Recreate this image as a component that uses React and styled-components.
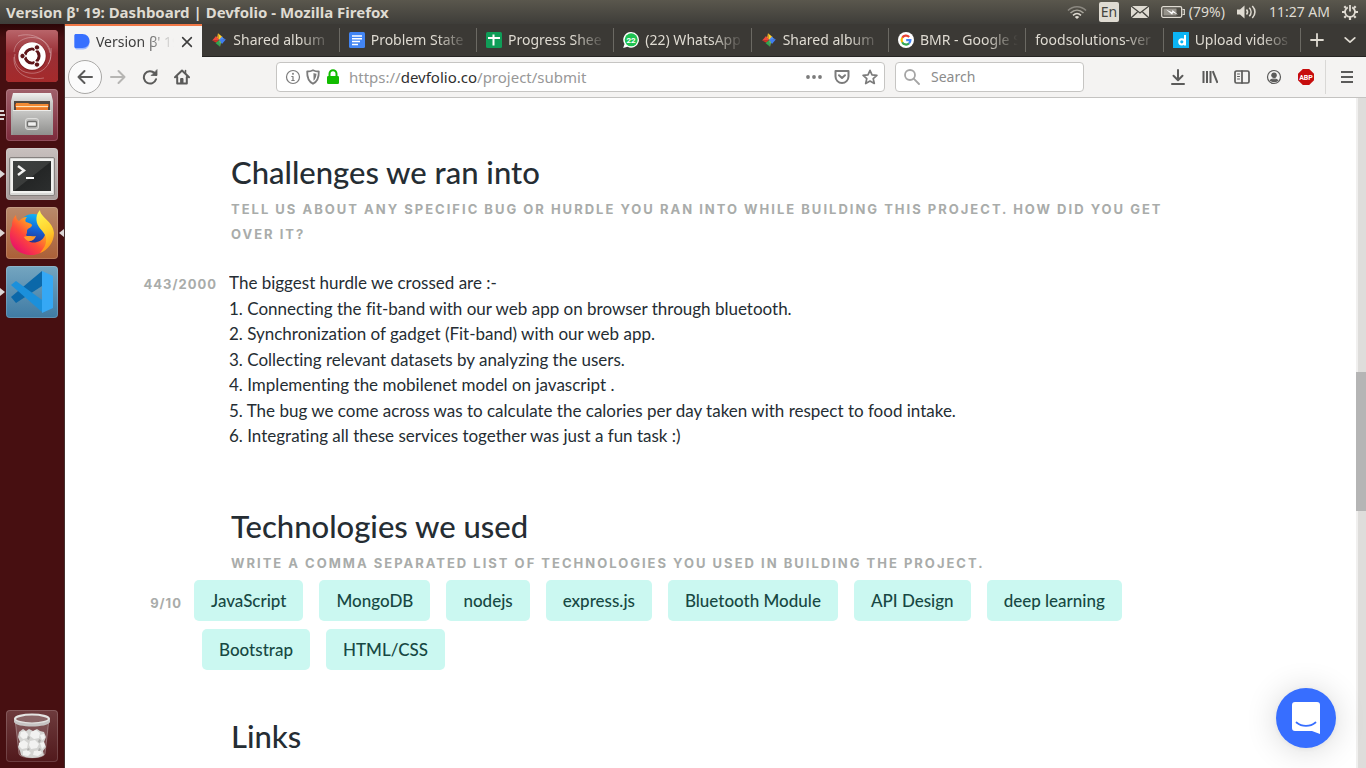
import React from "react";
import styled, { createGlobalStyle, css } from "styled-components";

const UI = `"Noto Sans", "Open Sans", sans-serif`;
const BODY = `Lato, "Open Sans", sans-serif`;
const CAPS = `Inter, "Open Sans", sans-serif`;

const GlobalStyle = createGlobalStyle`
  *, *::before, *::after { box-sizing: border-box; }
  body { margin: 0; background: #fff; overflow: hidden; }
  button, input, textarea { font: inherit; color: inherit; margin: 0; padding: 0; border: 0; background: none; outline: none; }
  button { display: inline-flex; align-items: center; justify-content: center; cursor: pointer; }
  svg { display: block; flex: none; }
  h2, p { margin: 0; }
`;

/* ---------- desktop ---------- */

const Desktop = styled.div`
  display: flex;
  flex-direction: column;
  height: 100vh;
`;

const Panel = styled.header`
  flex: none;
  display: flex;
  align-items: center;
  height: 24px;
  padding: 0 8px 0 6px;
  background: linear-gradient(#5a574d, #3e3d39);
  color: #dfdbd2;
  font: 14px/24px ${UI};
`;

const PanelTitle = styled.div`
  flex: 1;
  min-width: 0;
  white-space: nowrap;
  font-weight: 700;
  font-size: 15px;
`;

const Indicators = styled.div`
  display: flex;
  align-items: center;
  gap: 12px;
`;

const Indicator = styled.button`
  gap: 4px;
  height: 24px;
  font-size: 14px;
  white-space: nowrap;
`;

const Keyboard = styled(Indicator)`
  width: 20px;
  height: 20px;
  border-radius: 2px;
  background: #dfdbd2;
  color: #45443f;
`;

const Workspace = styled.div`
  flex: 1;
  min-height: 0;
  display: flex;
`;

const Launcher = styled.nav`
  flex: none;
  display: flex;
  flex-direction: column;
  gap: 7px;
  width: 65px;
  padding: 6px 0 6px;
  border-right: 1px solid #45302f;
  background: linear-gradient(#2b0607, #470f11 14px, #470f11);
`;

const LauncherItem = styled.div`
  display: flex;
  align-items: center;
  height: 52px;
  ${(p) => p.$last && css`margin-top: auto;`}
`;

const Marks = styled.div`
  width: 6px;
`;

const Tile = styled.button`
  width: 52px;
  height: 52px;
  border-radius: 4px;
  overflow: hidden;
  background: ${(p) => p.$bg};
  box-shadow: inset 0 0 0 1px rgba(255, 255, 255, 0.16);
`;

/* ---------- browser ---------- */

const Browser = styled.div`
  flex: 1;
  min-width: 0;
  display: flex;
  flex-direction: column;
`;

const TabStrip = styled.div`
  flex: none;
  display: flex;
  height: 33px;
  background: #3b3935;
  color: #dfdbd2;
  font: 14px/20px ${UI};
`;

const Tab = styled.button`
  flex: 1 1 0;
  min-width: 0;
  gap: 6px;
  padding: 0 8px 0 9px;
  justify-content: flex-start;
  border-bottom: 1px solid #252422;
  background: linear-gradient(#6b6963, #6b6963) right center / 1px 24px no-repeat;
  ${(p) =>
    p.$active &&
    css`
      background: #f4f3f2;
      color: #3d3d3d;
      border-top: 2px solid #f07746;
      border-bottom: 0;
    `}
`;

const TabLabel = styled.span`
  flex: 1;
  min-width: 0;
  overflow: hidden;
  text-align: left;
  white-space: nowrap;
  mask-image: linear-gradient(to left, transparent, #000 32px);
`;

const TabTools = styled.div`
  flex: none;
  display: flex;
  width: 65px;
  border-bottom: 1px solid #252422;
`;

const TabTool = styled.button`
  flex: 1;
`;

const Toolbar = styled.div`
  flex: none;
  display: flex;
  align-items: center;
  height: 41px;
  padding: 0 3px;
  background: #f4f3f2;
  border-bottom: 1px solid #c4c3c1;
  color: #5b5b5a;
  font: 14px/20px ${UI};
`;

const ToolButton = styled.button`
  width: 32px;
  height: 32px;
  color: ${(p) => (p.$dim ? "#b6b5b3" : "inherit")};
  ${(p) =>
    p.$round &&
    css`
      width: 34px;
      height: 34px;
      border: 1px solid #a9a8a6;
      border-radius: 50%;
      background: #fbfbfb;
    `}
`;

const Spacer = styled.div`
  width: 78px;
`;

const Field = styled.div`
  display: flex;
  align-items: center;
  height: 30px;
  gap: 4px;
  padding: 0 2px 0 8px;
  border: 1px solid #c6c5c3;
  border-radius: 4px;
  background: #fff;
  color: #7b7b7b;
  ${(p) => (p.$grow ? css`flex: 1; min-width: 0;` : css`width: 189px; margin-left: 10px; gap: 11px;`)}
`;

const Address = styled.div`
  flex: 1;
  margin-left: 4px;
  white-space: nowrap;
  font-size: 15px;
  color: #989898;
  b { font-weight: 400; color: #2f2f2f; }
`;

const SearchInput = styled.input`
  width: 100%;
  &::placeholder { color: #8b8b8b; opacity: 1; }
`;

const FieldButton = styled.button`
  width: ${(p) => p.$w || 16}px;
  height: 20px;
`;

const Divider = styled.div`
  width: 1px;
  height: 34px;
  margin: 0 5px 0 3px;
  background: #d9d8d6;
`;

const Viewport = styled.div`
  flex: 1;
  min-height: 0;
  display: flex;
`;

const Scrollbar = styled.div`
  flex: none;
  display: flex;
  flex-direction: column;
  width: 10px;
  background: #dedddb;
`;

const Track = styled.div`
  flex: ${(p) => p.$share} 0 0;
  border-left: 2px solid #f0efee;
`;

const Thumb = styled.div`
  flex: 139 0 0;
  background: #b5b5b5;
`;

/* ---------- page ---------- */

const Page = styled.main`
  flex: 1;
  min-width: 0;
  overflow: hidden;
  padding-top: 54px;
  background: #fff;
  color: #252d33;
`;

const Form = styled.form`
  display: flex;
  flex-direction: column;
  max-width: 1161px;
  margin: 0 auto;
`;

const Section = styled.section`
  margin-bottom: ${(p) => p.$gap || 0}px;
`;

const SectionHead = styled.div`
  padding: 0 100px 0 101px;
`;

const Title = styled.h2`
  margin-bottom: 5px;
  font: 500 31px/40px ${BODY};
`;

const Hint = styled.p`
  font: 700 13px/25px ${CAPS};
  letter-spacing: 2px;
  text-transform: uppercase;
  color: #a9acaa;
`;

const FieldRow = styled.div`
  display: flex;
  align-items: flex-start;
  gap: 12px;
  margin-top: ${(p) => p.$top}px;
  padding-right: 100px;
`;

const Counter = styled.div`
  flex: none;
  width: ${(p) => p.$w}px;
  padding-top: ${(p) => p.$top}px;
  text-align: right;
  font: 700 13px/25px ${CAPS};
  letter-spacing: 1px;
  color: #a9acaa;
`;

const Answer = styled.textarea`
  flex: 1;
  display: block;
  resize: none;
  overflow: hidden;
  font: 17px/1.5 ${BODY};
  font-variant-ligatures: none;
`;

const Tags = styled.ul`
  flex: 1;
  display: flex;
  flex-wrap: wrap;
  row-gap: 8px;
  margin: 0;
  padding: 0;
  list-style: none;
`;

const Tag = styled.li`
  margin: 0 8px;
  padding: 8px 17px;
  border-radius: 5px;
  background: #cbf8f1;
  color: #174843;
  font: 500 17px/25px ${BODY};
  &:first-child { margin-left: 0; }
`;

const Chat = styled.button`
  position: fixed;
  right: 30px;
  bottom: 20px;
  width: 60px;
  height: 60px;
  border-radius: 50%;
  background: #376eff;
  box-shadow: 0 1px 6px rgba(0, 0, 0, 0.06), 0 2px 32px rgba(0, 0, 0, 0.16);
`;

/* ---------- drawings ---------- */

const Line = ({ size = 16, w = 2, children, ...rest }) => (
  <svg width={size} height={size} viewBox="0 0 16 16" fill="none" stroke="currentColor" strokeWidth={w} strokeLinecap="round" strokeLinejoin="round" {...rest}>
    {children}
  </svg>
);

const DevfolioMark = () => (
  <svg width="16" height="16" viewBox="0 0 16 16">
    <path d="M2.500 2H9c4 0 6.500 3 6.500 6.500S13 15.500 9 15.500H3.500c-1.500 0-2.500-.6-2.500-2z" fill="#9db9ff" />
    <path d="M2 0h6.500c4 0 7 3 7 7s-3 7-7 7H2c-1 0-1.700-.6-1.700-1.600V1.600C.3.600 1 0 2 0z" fill="#3770ff" />
  </svg>
);

const PhotosMark = () => (
  <svg width="16" height="16" viewBox="0 0 16 16">
    <path d="M7 1.200 11.500 5 8 8z" fill="#ffcf2b" />
    <path d="M7 1.200 8 8 6 6z" fill="#f9a825" />
    <path d="M14.800 7.500 11 12 8 8z" fill="#3f7df0" />
    <path d="M8 8 11 4.500l1.500 1.700 2.300 1.300z" fill="#4d8dfb" />
    <path d="M9 14.800 4.500 11 8 8z" fill="#2fa84f" />
    <path d="M9 14.800 8 8l2 2z" fill="#6fc36f" />
    <path d="M1.200 8.500 5 4l3 4z" fill="#ef4a3c" />
    <path d="M1.200 8.500 8 8l-3 2.500z" fill="#d93025" />
  </svg>
);

const DocsMark = () => (
  <svg width="16" height="16" viewBox="0 0 16 16">
    <rect width="16" height="16" rx="1.500" fill="#4285f4" />
    <path d="M3 4h10M3 6.800h10M3 9.600h8M3 12.400h6" stroke="#fff" strokeWidth="1.500" />
  </svg>
);

const SheetsMark = () => (
  <svg width="16" height="16" viewBox="0 0 16 16">
    <rect width="16" height="16" rx="1.500" fill="#0f9d58" />
    <path d="M2 6h12M7.500 2.500v11" stroke="#fff" strokeWidth="2" />
  </svg>
);

const WhatsMark = () => (
  <svg width="16" height="16" viewBox="0 0 16 16">
    <path d="M8.200 0a7.800 7.800 0 1 1-3.700 14.700L.2 16l1.300-4A7.800 7.800 0 0 1 8.200 0z" fill="#fff" />
    <circle cx="8.200" cy="7.800" r="6.500" fill="#1fc252" />
    <text x="8" y="10.800" textAnchor="middle" fontSize="8" fontWeight="700" fontFamily="Roboto, sans-serif" fill="#fff">22</text>
  </svg>
);

const GoogleMark = () => (
  <svg width="16" height="16" viewBox="0 0 16 16" fill="none" strokeWidth="2.200">
    <circle cx="8" cy="8" r="8" fill="#fff" />
    <path d="M11.200 4.900A4.400 4.400 0 0 0 4.200 5.800" stroke="#ea4335" />
    <path d="M4.200 5.800a4.400 4.400 0 0 0 0 4.400" stroke="#fbbc05" />
    <path d="M4.200 10.200a4.400 4.400 0 0 0 6.800 1.200" stroke="#34a853" />
    <path d="M11 11.400A4.400 4.400 0 0 0 12.400 8.100H8.200" stroke="#4285f4" />
  </svg>
);

const DailyMark = () => (
  <svg width="16" height="16" viewBox="0 0 16 16">
    <rect width="16" height="16" fill="#0bb4f5" />
    <circle cx="8.800" cy="9.800" r="2.600" fill="none" stroke="#fff" strokeWidth="2" />
    <path d="M12 3v10.400" stroke="#fff" strokeWidth="2" />
  </svg>
);

const UbuntuArt = () => (
  <svg width="52" height="52" viewBox="0 0 52 52">
    <defs>
      <linearGradient id="ub" x1="0" y1="0" x2="0" y2="1">
        <stop offset="0" stopColor="#b9656a" />
        <stop offset=".45" stopColor="#9a2f35" />
        <stop offset="1" stopColor="#a52a2b" />
      </linearGradient>
    </defs>
    <rect width="52" height="52" fill="url(#ub)" />
    <g fill="none" stroke="#fff" strokeOpacity=".3">
      <path d="M8 22C9 8 28 3 39 12c7 6 7 17 3 22" />
      <path d="M45 18c2 17-9 27-22 25C13 42 7 33 9 24" />
      <path d="M12 6c13-4 29 2 32 17" />
      <path d="M38 48C21 51 7 43 8 27" />
    </g>
    <circle cx="26" cy="26.500" r="14.500" fill="#5e1015" opacity=".4" />
    <circle cx="26" cy="26" r="13.700" fill="#fff" />
    <circle cx="26" cy="26" r="7" fill="none" stroke="#5e1519" strokeWidth="3.200" />
    <path d="M26 26 14.500 26M26 26l5.700-9.900M26 26l5.700 9.900" stroke="#fff" strokeWidth="1.500" />
    <g fill="#5e1519" stroke="#fff" strokeWidth="1">
      <circle cx="16.500" cy="26" r="2.700" />
      <circle cx="31" cy="17.400" r="2.700" />
      <circle cx="31" cy="34.600" r="2.700" />
    </g>
    <circle cx="26" cy="26" r="5.400" fill="#fff" />
  </svg>
);

const FilesArt = () => (
  <svg width="52" height="52" viewBox="0 0 52 52">
    <defs>
      <linearGradient id="fa" x1="0" y1="0" x2="0" y2="1">
        <stop offset="0" stopColor="#f0f0ef" />
        <stop offset=".25" stopColor="#c9c9c7" />
        <stop offset="1" stopColor="#969694" />
      </linearGradient>
      <linearGradient id="fb" x1="0" y1="0" x2="0" y2="1">
        <stop offset="0" stopColor="#c9c9c7" />
        <stop offset="1" stopColor="#8f8f8d" />
      </linearGradient>
    </defs>
    <path d="M7 4h38l2 8v34H5V12z" fill="url(#fa)" />
    <path d="M8 12h36v10H8z" fill="#504942" />
    <path d="M9 15h34v3H9z" fill="#b54f1d" />
    <path d="M10 14h12l2 1h18v8H10z" fill="#f28b34" />
    <path d="M10 17h32v1H10z" fill="#ffe3bd" />
    <path d="M10 19h32v3H10z" fill="#e9792b" />
    <path d="M7 21h38v25H7z" fill="url(#fb)" />
    <path d="M7 21.500h38" stroke="#ececea" />
    <rect x="19.500" y="29.500" width="13" height="11" rx="2.500" fill="#bdbdbb" stroke="#dededc" />
    <rect x="21.500" y="32.500" width="9" height="5" rx="1" fill="#f0f0ef" stroke="#71716f" strokeWidth="1.300" />
  </svg>
);

const TerminalArt = () => (
  <svg width="52" height="52" viewBox="0 0 52 52">
    <defs>
      <linearGradient id="ta" x1="0" y1="0" x2="1" y2="1">
        <stop offset="0" stopColor="#3d403f" />
        <stop offset=".5" stopColor="#3a3c3b" />
        <stop offset=".52" stopColor="#242626" />
        <stop offset="1" stopColor="#2c2e2e" />
      </linearGradient>
    </defs>
    <rect x="3.500" y="9.500" width="45" height="38" rx="1.500" fill="#d9d9d7" stroke="#85807e" />
    <rect x="5" y="11" width="42" height="34" fill="#f1f1ef" />
    <rect x="7" y="13" width="38" height="30" fill="url(#ta)" />
    <path d="m12 18 6 4.500-6 4.500" fill="none" stroke="#f2f2f1" strokeWidth="2.400" />
    <path d="M20 30h8" stroke="#fff" strokeWidth="2" />
  </svg>
);

const FirefoxArt = () => (
  <svg width="52" height="52" viewBox="0 0 52 52">
    <defs>
      <linearGradient id="ga" x1=".9" y1=".1" x2=".15" y2=".9">
        <stop offset="0" stopColor="#fff04a" />
        <stop offset=".3" stopColor="#ffa321" />
        <stop offset=".62" stopColor="#ff4a3a" />
        <stop offset="1" stopColor="#e8106a" />
      </linearGradient>
      <linearGradient id="gb" x1=".6" y1="0" x2=".4" y2="1">
        <stop offset="0" stopColor="#12b6f6" />
        <stop offset=".5" stopColor="#1464d8" />
        <stop offset="1" stopColor="#282a85" />
      </linearGradient>
      <linearGradient id="gc" x1=".4" y1="0" x2=".6" y2="1">
        <stop offset="0" stopColor="#fff44f" />
        <stop offset=".5" stopColor="#ffd22e" />
        <stop offset="1" stopColor="#ff8b16" />
      </linearGradient>
    </defs>
    <circle cx="27" cy="22" r="15" fill="url(#gb)" />
    <path d="M6 19c0-5 1-8 4-11 0 3 1 5 3 6 2-2 4-4 8-4-2 2-2 4-1 5 2 1 5 1 6 3 0 3-5 3-5 6 0 1 0 3-1 4 2 3 5 2 9 2-1 3-4 4-6 4 3 3 13 2 16-6 2-6-1-11-3-16l10 12c1 14-9 24-20 24C13 48 4 40 4 29c0-4 0-7 2-10z" fill="url(#ga)" />
    <path d="M33 20c-4-6-3-13 1-17 0 7 13 11 14 23 0 9-6 17-14 20 3-4 7-8 6-15-1-5-4-7-7-11z" fill="url(#gc)" />
    <path d="M18 30c4-2 7 0 12-1-1 3-4 5-7 5-2 0-4-2-5-4z" fill="#ff9a2b" />
  </svg>
);

const CodeArt = () => (
  <svg width="52" height="52" viewBox="0 0 52 52">
    <path d="M5 31 36 5v15L10 37z" fill="#0b68a9" />
    <path d="m5 19 5-4 26 19v12z" fill="#1b90db" />
    <path d="m36 5 11 5v32l-11 5z" fill="#35a8f5" />
  </svg>
);

const TrashArt = () => (
  <svg width="52" height="52" viewBox="0 0 52 52">
    <path d="M9 9h34l-4 35c-1 5-25 5-26 0z" fill="#fff" fillOpacity=".16" stroke="#fff" strokeOpacity=".3" />
    <path d="m13 22 4-3 3 2 3-2 4 2 4-2 3 2 4 1 2 5-2 5 2 5-3 4 1 4c-5 4-18 4-23 0l-1-4-2-4 2-5-2-5z" fill="#d4d4d2" />
    <g fill="#f2f2f1">
      <path d="m15 22 4-1 3 3-1 4-4 1-3-3zM25 22l5-2 4 3-1 5-5 1-4-3zM34 25l4-1 1 4-3 2zM13 33l5-3 4 3-1 5-5 1-3-3zM24 31l5-1 4 4-2 4-6 1-2-4zM34 33l4-1 1 4-3 3zM17 41l5-1 3 3-3 3-5-1zM28 41l6-1 2 3-4 3-5-1z" />
    </g>
    <g fill="#aeaeac">
      <path d="m22 26 2 1-1 3-2-1zM33 29l2 1-1 3-2-1zM22 38l2 1-2 2-1-1zM33 38l2 1-1 2h-2z" />
    </g>
    <ellipse cx="26" cy="9" rx="17" ry="4.500" fill="#8a6667" stroke="#e4e4e2" strokeWidth="2.200" />
    <path d="M8 9v3c2 6 34 6 36 0V9c-2 6-34 6-36 0z" fill="#c6c4c3" />
  </svg>
);

const Arrow = () => (
  <svg width="6" height="10" viewBox="0 0 6 10"><path d="M0 1v8l5-4z" fill="#dcd6d6" /></svg>
);
const ArrowLeft = () => (
  <svg width="6" height="10" viewBox="0 0 6 10"><path d="M6 1v8L1 5z" fill="#dcd6d6" /></svg>
);
const Bars = () => (
  <svg width="6" height="14" viewBox="0 0 6 14"><path d="M0 3h4M0 7h5M0 11h4" stroke="#dcd6d6" strokeWidth="2" /></svg>
);

/* ---------- data ---------- */

const apps = [
  { name: "Ubuntu", art: <UbuntuArt />, bg: "#9a2f35" },
  { name: "Files", art: <FilesArt />, bg: "linear-gradient(#a0606a, #7c2a3b)", mark: <Bars /> },
  { name: "Terminal", art: <TerminalArt />, bg: "linear-gradient(#c8c0be, #a79d9b)", mark: <Arrow /> },
  { name: "Firefox", art: <FirefoxArt />, bg: "linear-gradient(#b98a6c, #ab5f37)", mark: <Arrow />, focused: true },
  { name: "Visual Studio Code", art: <CodeArt />, bg: "linear-gradient(#74a5c0, #3f7ba4)", mark: <Arrow /> },
  { name: "Trash", art: <TrashArt />, bg: "linear-gradient(#6e3b3d, #51191c)", last: true },
];

const tabs = [
  { label: "Version β' 19", icon: <DevfolioMark />, active: true },
  { label: "Shared album", icon: <PhotosMark /> },
  { label: "Problem State", icon: <DocsMark /> },
  { label: "Progress Shee", icon: <SheetsMark /> },
  { label: "(22) WhatsApp", icon: <WhatsMark /> },
  { label: "Shared album", icon: <PhotosMark /> },
  { label: "BMR - Google S", icon: <GoogleMark /> },
  { label: "foodsolutions-ver" },
  { label: "Upload videos", icon: <DailyMark /> },
];

const answer = `The biggest hurdle we crossed are :-
1. Connecting the fit-band with our web app on browser through bluetooth.
2. Synchronization of gadget (Fit-band) with our web app.
3. Collecting relevant datasets by analyzing the users.
4. Implementing the mobilenet model on javascript .
5. The bug we come across was to calculate the calories per day taken with respect to food intake.
6. Integrating all these services together was just a fun task :)`;

const tags = ["JavaScript", "MongoDB", "nodejs", "express.js", "Bluetooth Module", "API Design", "deep learning", "Bootstrap", "HTML/CSS"];

/* ---------- app ---------- */

const TopPanel = () => (
  <Panel>
    <PanelTitle>Version β' 19: Dashboard | Devfolio - Mozilla Firefox</PanelTitle>
    <Indicators>
      <Indicator aria-label="Network">
        <svg width="20" height="16" viewBox="0 0 20 16" fill="none" strokeWidth="1.600">
          <path d="M1 6.500C6 1.500 14 1.500 19 6.500" stroke="#8b8880" />
          <path d="M3.500 9c4-3.700 9-3.700 13 0" stroke="#a8a59c" />
          <path d="M6 11.300c2.500-2.200 5.500-2.200 8 0" stroke="#dfdbd2" />
          <path d="m7.800 13 2.200 2 2.200-2c-1.300-1.200-3.100-1.200-4.400 0z" fill="#dfdbd2" />
        </svg>
      </Indicator>
      <Keyboard>En</Keyboard>
      <Indicator aria-label="Mail">
        <svg width="18" height="12" viewBox="0 0 18 12">
          <rect width="18" height="12" fill="#dfdbd2" />
          <path d="m0 0 9 7 9-7M0 12l6.500-6M18 12l-6.500-6" fill="none" stroke="#45443f" strokeWidth="1.300" />
        </svg>
      </Indicator>
      <Indicator>
        <svg width="24" height="12" viewBox="0 0 24 12">
          <rect x=".7" y=".7" width="20" height="10.600" rx="1.500" fill="none" stroke="#dfdbd2" strokeWidth="1.300" />
          <path d="M21.500 3.500h1.800v5h-1.800" fill="none" stroke="#dfdbd2" strokeWidth="1.200" />
          <path d="M2.500 2.500h13v7h-13z" fill="#96938b" />
          <path d="m5 3.500 6 2.800.5-2.300L17 8.800l-5-2.300-.8 2.200z" fill="#fff" />
        </svg>
        (79%)
      </Indicator>
      <Indicator aria-label="Sound">
        <svg width="20" height="14" viewBox="0 0 20 14">
          <path d="M0 4.500h3L7.500.5v13L3 9.500H0z" fill="#dfdbd2" />
          <path d="M9.500 4.500c1.300 1.500 1.300 3.500 0 5M12.300 2.800c2.300 2.500 2.300 6 0 8.400M15.300 1c3.500 3.500 3.500 8.500 0 12" fill="none" stroke="#dfdbd2" strokeWidth="1.600" />
        </svg>
      </Indicator>
      <Indicator>11:27 AM</Indicator>
      <Indicator aria-label="Session">
        <svg width="16" height="16" viewBox="0 0 16 16" fill="none" stroke="#dfdbd2" strokeWidth="1.800">
          <path d="M5.800 3.400a5 5 0 1 0 4.400 0M8 1v6.500" />
          <path d="M2.300 2.300 4 4M13.700 2.300 12 4M0 8h3M13 8h3M2.300 13.700 4 12M13.700 13.700 12 12M8 13v3" strokeWidth="2.200" />
        </svg>
      </Indicator>
    </Indicators>
  </Panel>
);

export default function App() {
  return (
    <Desktop>
      <GlobalStyle />
      <TopPanel />
      <Workspace>
        <Launcher aria-label="Launcher">
          {apps.map((a) => (
            <LauncherItem key={a.name} $last={a.last}>
              <Marks>{a.mark}</Marks>
              <Tile aria-label={a.name} $bg={a.bg}>{a.art}</Tile>
              {a.focused && <ArrowLeft />}
            </LauncherItem>
          ))}
        </Launcher>
        <Browser>
          <TabStrip>
            {tabs.map((t, i) => (
              <Tab key={i} $active={t.active}>
                {t.icon}
                <TabLabel>{t.label}</TabLabel>
                {t.active && (
                  <Line size={14} w={1.800}><path d="m3 3 10 10M13 3 3 13" /></Line>
                )}
              </Tab>
            ))}
            <TabTools>
              <TabTool aria-label="New tab"><Line w={1.800}><path d="M8 2v12M2 8h12" /></Line></TabTool>
              <TabTool aria-label="All tabs"><Line size={14} w={2}><path d="m2.500 5.500 5.500 5 5.500-5" /></Line></TabTool>
            </TabTools>
          </TabStrip>
          <Toolbar>
            <ToolButton $round aria-label="Back"><Line><path d="M15 8H1.500M7.500 2 1.500 8l6 6" /></Line></ToolButton>
            <ToolButton $dim aria-label="Forward"><Line><path d="M1 8h13.500M8.500 2l6 6-6 6" /></Line></ToolButton>
            <ToolButton aria-label="Reload">
              <Line><path d="M14 10.200A6.200 6.200 0 1 1 12.500 4l1.500 1.800" /><path d="M15 1v5.500H9.500z" fill="currentColor" strokeWidth=".8" /></Line>
            </ToolButton>
            <ToolButton aria-label="Home">
              <Line><path d="M1 8.200 8 1.500l7 6.700M3.200 8v6.500h9.600V8M8 14v-3.500" /><path d="M11.500 1.500v3" strokeWidth="1.500" /><path d="M7 9.500h2v5H7z" fill="currentColor" strokeWidth="1" /></Line>
            </ToolButton>
            <Spacer />
            <Field $grow>
              <FieldButton aria-label="Site information"><Line w={1.200}><circle cx="8" cy="8" r="6.500" /><path d="M8 7.500v4M6.800 7.500H8M6.800 11.500h2.400" /><path d="M8 4.700v.2" strokeWidth="1.800" /></Line></FieldButton>
              <FieldButton aria-label="Tracking protection"><Line w={1.800}><path d="M8 1.200c2 1 4 1.300 5.800 1.300C14 8 12.500 12.500 8 14.800 3.500 12.500 2 8 2.200 2.500 4 2.500 6 2.200 8 1.200z" /><path d="M8.500 4c1 .5 2 .8 3 .8-.2 3-1 5.500-3 7z" fill="currentColor" stroke="none" /></Line></FieldButton>
              <FieldButton aria-label="Secure connection">
                <svg width="14" height="16" viewBox="0 0 14 16"><path d="M3.500 8V4.700a3.500 3.500 0 0 1 7 0V8" fill="none" stroke="#12bc00" strokeWidth="2" /><rect x="1" y="7" width="12" height="8" rx="1.300" fill="#12bc00" /></svg>
              </FieldButton>
              <Address>https://<b>devfolio.co</b>/project/submit</Address>
              <FieldButton $w={24} aria-label="Page actions"><svg width="16" height="16" viewBox="0 0 16 16" fill="currentColor"><circle cx="2" cy="8" r="1.900" /><circle cx="8" cy="8" r="1.900" /><circle cx="14" cy="8" r="1.900" /></svg></FieldButton>
              <FieldButton $w={24} aria-label="Save to Pocket"><Line><path d="M1.500 2h13v5.500a6.500 6.500 0 0 1-13 0z" /><path d="m5 6.200 3 2.800 3-2.800" /></Line></FieldButton>
              <FieldButton $w={24} aria-label="Bookmark"><Line w={1.700}><path d="m8 1.300 2 4.500 4.900.5-3.700 3.300 1.100 4.900L8 12l-4.300 2.500 1.100-4.900L1.100 6.300 6 5.800z" /></Line></FieldButton>
            </Field>
            <Field>
              <Line stroke="#a5a5a5" w={1.800}><circle cx="6" cy="6" r="5" /><path d="m9.700 9.700 5.300 5.300" /></Line>
              <SearchInput aria-label="Search" placeholder="Search" />
            </Field>
            <Spacer />
            <ToolButton aria-label="Downloads"><Line><path d="M8 1v10M3.500 6.800 8 11.200l4.500-4.400M2 15h12" /></Line></ToolButton>
            <ToolButton aria-label="Library"><Line strokeLinecap="butt"><path d="M1.500 2v12M5 2v12M8.500 2v12M10.800 2.200 15.500 14" /></Line></ToolButton>
            <ToolButton aria-label="Sidebar"><Line w={1.700}><rect x="1" y="2" width="14" height="12" rx="1.500" /><path d="M8 2v12" /><path d="M3.500 5h2M3.500 7.500h2M3.500 10h2" strokeWidth="1" /></Line></ToolButton>
            <ToolButton aria-label="Account"><Line w={1.200}><circle cx="8" cy="8" r="6.500" /><circle cx="8" cy="6.300" r="2.200" fill="currentColor" /><path d="M4.300 11.300c2-1.500 5.400-1.500 7.400 0-2 1.800-5.400 1.800-7.400 0z" fill="currentColor" /></Line></ToolButton>
            <ToolButton aria-label="Adblock Plus">
              <svg width="16" height="16" viewBox="0 0 16 16"><path d="M4.800 0h6.400L16 4.800v6.400L11.200 16H4.800L0 11.200V4.800z" fill="#c70d0d" /><text x="8" y="10.500" textAnchor="middle" fontSize="7" fontWeight="700" fontFamily="Roboto, sans-serif" fill="#fff">ABP</text></svg>
            </ToolButton>
            <Divider />
            <ToolButton aria-label="Menu"><Line strokeLinecap="butt"><path d="M2 3h12M2 8h12M2 13h12" /></Line></ToolButton>
          </Toolbar>
          <Viewport>
            <Page>
              <Form>
                <Section $gap={57}>
                  <SectionHead>
                    <Title>Challenges we ran into</Title>
                    <Hint id="challenges-hint">Tell us about any specific bug or hurdle you ran into while building this project. How did you get over it?</Hint>
                  </SectionHead>
                  <FieldRow $top={23}>
                    <Counter $w={87} $top={2}>443/2000</Counter>
                    <Answer rows={7} aria-labelledby="challenges-hint" defaultValue={answer} />
                  </FieldRow>
                </Section>
                <Section $gap={46}>
                  <SectionHead>
                    <Title>Technologies we used</Title>
                    <Hint>Write a comma separated list of technologies you used in building the project.</Hint>
                  </SectionHead>
                  <FieldRow $top={4}>
                    <Counter $w={52} $top={11}>9/10</Counter>
                    <Tags>{tags.map((t) => <Tag key={t}>{t}</Tag>)}</Tags>
                  </FieldRow>
                </Section>
                <Section>
                  <SectionHead><Title>Links</Title></SectionHead>
                </Section>
              </Form>
            </Page>
            <Scrollbar>
              <Track $share={274} />
              <Thumb />
              <Track $share={257} />
            </Scrollbar>
          </Viewport>
        </Browser>
      </Workspace>
      <Chat aria-label="Open chat">
        <svg width="28" height="32" viewBox="0 0 28 32">
          <path d="M3 0h22a3 3 0 0 1 3 3v29l-8-3H3a3 3 0 0 1-3-3V3a3 3 0 0 1 3-3z" fill="#fff" />
          <path d="M4.500 20.500c5.500 4.500 13.500 4.500 19 0" fill="none" stroke="#376eff" strokeWidth="1.800" strokeLinecap="round" />
        </svg>
      </Chat>
    </Desktop>
  );
}
